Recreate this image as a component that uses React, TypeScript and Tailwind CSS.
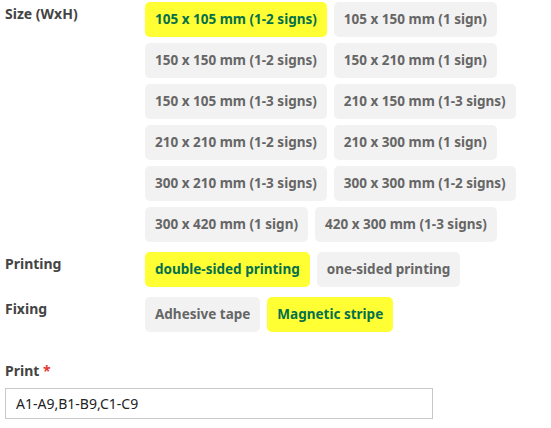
import { useState } from 'react';

const sizes = [
  '105 x 105 mm (1-2 signs)',
  '105 x 150 mm (1 sign)',
  '150 x 150 mm (1-2 signs)',
  '150 x 210 mm (1 sign)',
  '150 x 105 mm (1-3 signs)',
  '210 x 150 mm (1-3 signs)',
  '210 x 210 mm (1-2 signs)',
  '210 x 300 mm (1 sign)',
  '300 x 210 mm (1-3 signs)',
  '300 x 300 mm (1-2 signs)',
  '300 x 420 mm (1 sign)',
  '420 x 300 mm (1-3 signs)',
];

const printing = ['double-sided printing', 'one-sided printing'];
const fixing = ['Adhesive tape', 'Magnetic stripe'];

function Option({ label, active, onClick }: { label: string; active: boolean; onClick: () => void }) {
  return (
    <button
      type="button"
      onClick={onClick}
      className={`h-[35px] px-[10px] rounded-[5px] text-[13.5px] font-bold whitespace-nowrap ${
        active ? 'bg-[#ffff33] text-[#04704c]' : 'bg-[#f2f2f2] text-[#666666]'
      }`}
    >
      {label}
    </button>
  );
}

function Group({ title, items, value, onChange }: { title: string; items: string[]; value: string; onChange: (v: string) => void }) {
  return (
    <div className="flex mb-[10px]">
      <div className="w-[140px] shrink-0 pt-[1px] text-[14px] font-bold text-[#444444]">{title}</div>
      <div className="flex flex-wrap gap-x-[7px] gap-y-[6px] w-[400px]">
        {items.map(it => (
          <Option key={it} label={it} active={it === value} onClick={() => onChange(it)} />
        ))}
      </div>
    </div>
  );
}

export default function App() {
  const [size, setSize] = useState(sizes[0]);
  const [print, setPrint] = useState(printing[0]);
  const [fix, setFix] = useState(fixing[1]);
  const [text, setText] = useState('A1-A9,B1-B9,C1-C9');

  return (
    <div className="bg-white w-[551px] h-[428px] pl-[5px] pt-[2px]" style={{ fontFamily: '"Noto Sans", sans-serif' }}>
      <Group title="Size (WxH)" items={sizes} value={size} onChange={setSize} />
      <Group title="Printing" items={printing} value={print} onChange={setPrint} />
      <Group title="Fixing" items={fixing} value={fix} onChange={setFix} />

      <div className="mt-[28px]">
        <div className="text-[14px] font-bold text-[#444444] mb-[7px]">
          Print <span className="text-[#e53935]">*</span>
        </div>
        <input
          value={text}
          onChange={e => setText(e.target.value)}
          className="w-[428px] h-[31px] border border-[#c8c8c8] px-[10px] text-[14px] text-[#222222] outline-none"
        />
      </div>
    </div>
  );
}
